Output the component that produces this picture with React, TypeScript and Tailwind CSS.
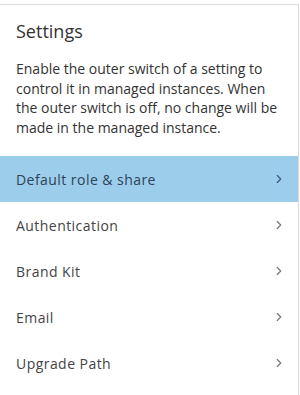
import { ChevronRight } from "lucide-react";

const items = [
  { label: "Default role & share", active: true },
  { label: "Authentication", active: false },
  { label: "Brand Kit", active: false },
  { label: "Email", active: false },
  { label: "Upgrade Path", active: false },
];

export default function App() {
  return (
    <div
      className="h-[395px] w-[300px] overflow-hidden bg-white"
      style={{ fontFamily: '"Open Sans", sans-serif' }}
    >
      <div className="h-full w-[299px] border-r border-[#d9d9d9]">
        <div className="mt-1 border-t border-[#dcdcdc]">
          <div className="px-4 pt-[14px] pb-[19px]">
            <h2 className="text-[18px] leading-6 text-[#333]">Settings</h2>
            <p className="mt-[16px] text-[14px] leading-[19.5px] text-[#333]">
              Enable the outer switch of a setting to control it in managed
              instances. When the outer switch is off, no change will be made
              in the managed instance.
            </p>
          </div>
          <ul>
            {items.map((item) => (
              <li
                key={item.label}
                className={[
                  "flex h-[46px] items-center justify-between pl-4 pr-[12px] text-[14px] tracking-[0.45px]",
                  item.active
                    ? "bg-[#9ccdeb] text-[#2e4357]"
                    : "text-[#444]",
                ].join(" ")}
              >
                <span>{item.label}</span>
                <ChevronRight
                  className={item.active ? "text-[#3d5873]" : "text-[#777]"}
                  size={14}
                  strokeWidth={2}
                />
              </li>
            ))}
          </ul>
        </div>
      </div>
    </div>
  );
}
